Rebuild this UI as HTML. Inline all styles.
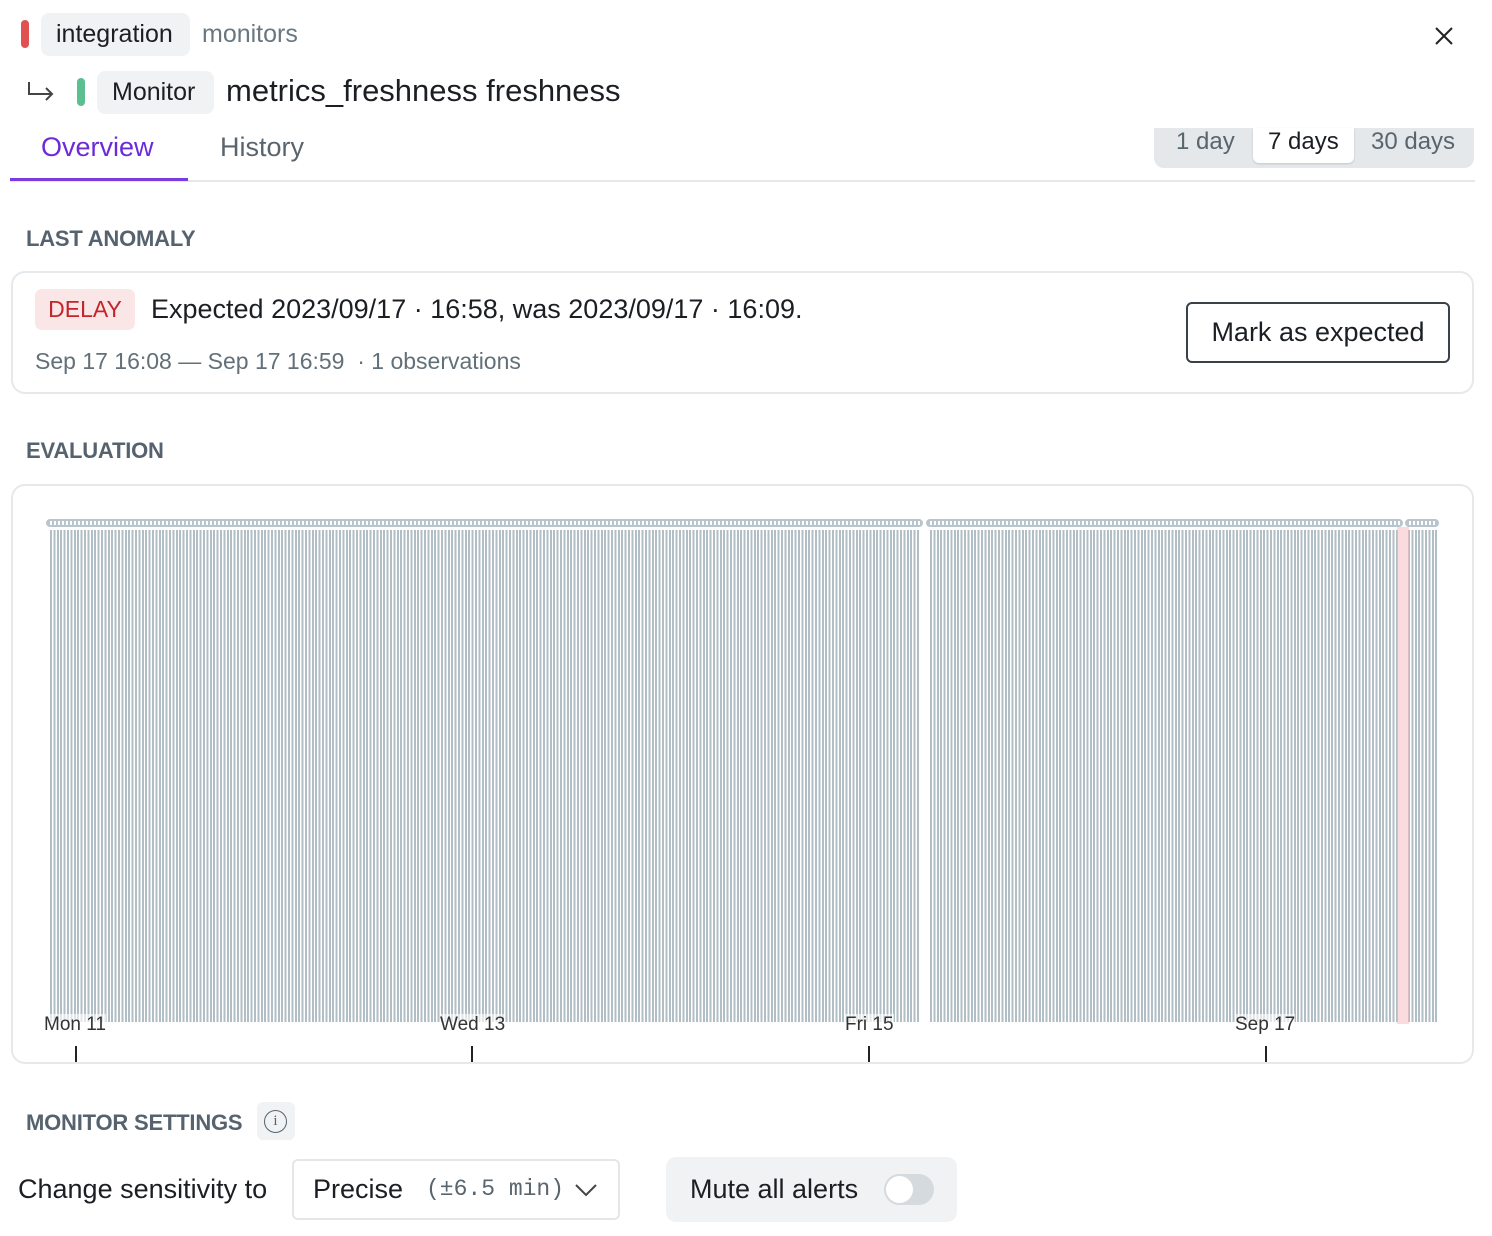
<!DOCTYPE html>
<html><head><meta charset="utf-8"><style>
*{box-sizing:border-box;margin:0;padding:0}
body{width:1492px;height:1236px;background:#fff;font-family:"Liberation Sans",sans-serif;color:#1b1f23;position:relative;overflow:hidden}
.a{position:absolute}
.chip{background:#f0f2f4;border-radius:8px}
.hdr{font-size:22px;color:#56636e;font-weight:bold;letter-spacing:-0.2px}
.bars{position:absolute;top:530px;height:492px;background:repeating-linear-gradient(90deg,#b2bec5 0 2px,#fff 2px 3.4px)}
.pill{position:absolute;top:519px;height:8px;border:2px solid #b9c5cc;border-radius:5px;background:repeating-linear-gradient(90deg,#b9c5cc 0 2px,#fff 2px 4px)}
.lbl{position:absolute;top:1014px;font-size:19px;color:#333;background:rgba(255,255,255,.6)}
.tick{position:absolute;top:1046px;width:2px;height:16px;background:#222}
</style></head><body>
<div class="a" style="left:21px;top:20px;width:8px;height:28px;background:#e05252;border-radius:4px"></div>
<div class="a chip" style="left:41px;top:13px;width:149px;height:43px;font-size:25px;line-height:43px;padding-left:15px">integration</div>
<div class="a" style="left:202px;top:20px;font-size:25px;color:#697780">monitors</div>
<svg class="a" style="left:26px;top:80px" width="30" height="24"><path d="M3 2 V14 H26 M20 8 L26 14 L20 20" stroke="#444" stroke-width="2" fill="none"/></svg>
<div class="a" style="left:77px;top:78px;width:8px;height:28px;background:#5cbf90;border-radius:4px"></div>
<div class="a chip" style="left:97px;top:71px;width:117px;height:43px;font-size:25px;line-height:43px;padding-left:15px">Monitor</div>
<div class="a" style="left:226px;top:73px;font-size:31px">metrics_freshness freshness</div>
<svg class="a" style="left:1434px;top:26px" width="20" height="20"><path d="M2 2 L18 18 M18 2 L2 18" stroke="#222" stroke-width="2"/></svg>
<div class="a" style="left:41px;top:132px;font-size:27px;color:#6c2bd9">Overview</div>
<div class="a" style="left:220px;top:132px;font-size:27px;color:#59656e">History</div>
<div class="a" style="left:10px;top:180px;width:1465px;height:2px;background:#e5e8eb"></div>
<div class="a" style="left:10px;top:178px;width:178px;height:3px;background:#7a3be0"></div>
<div class="a" style="left:1154px;top:128px;width:320px;height:40px;background:#e4e8eb;border-radius:0 0 10px 10px"></div>
<div class="a" style="left:1253px;top:128px;width:101px;height:35px;background:#fff;border-radius:0 0 6px 6px;box-shadow:0 1px 2px rgba(0,0,0,.15)"></div>
<div class="a" style="left:1176px;top:128px;font-size:24px;color:#59656e">1 day</div>
<div class="a" style="left:1268px;top:128px;font-size:24px;color:#1b1f23">7 days</div>
<div class="a" style="left:1371px;top:128px;font-size:24px;color:#59656e">30 days</div>

<div class="a hdr" style="left:26px;top:226px">LAST ANOMALY</div>
<div class="a" style="left:11px;top:271px;width:1463px;height:123px;border:2px solid #e6e9ec;border-radius:14px"></div>
<div class="a" style="left:35px;top:289px;width:100px;height:41px;background:#fbe6e7;border-radius:7px;color:#c0262c;font-size:23px;line-height:41px;text-align:center">DELAY</div>
<div class="a" style="left:151px;top:294px;font-size:27px">Expected 2023/09/17 · 16:58, was 2023/09/17 · 16:09.</div>
<div class="a" style="left:35px;top:348px;font-size:23px;color:#627079">Sep 17 16:08 — Sep 17 16:59 &nbsp;· 1 observations</div>
<div class="a" style="left:1186px;top:302px;width:264px;height:61px;border:2px solid #3b4148;border-radius:6px;font-size:27px;line-height:57px;text-align:center">Mark as expected</div>

<div class="a hdr" style="left:26px;top:438px">EVALUATION</div>
<div class="a" style="left:11px;top:484px;width:1463px;height:580px;border:2px solid #e6e9ec;border-radius:14px"></div>
<div class="pill" style="left:46px;width:877px"></div>
<div class="pill" style="left:926px;width:477px"></div>
<div class="pill" style="left:1405px;width:34px"></div>
<div class="bars" style="left:50px;width:869px"></div>
<div class="bars" style="left:930px;width:468px"></div>
<div class="bars" style="left:1408px;width:29px"></div>
<div class="a" style="left:1397px;top:527px;width:12px;height:497px;background:rgba(245,190,195,.55)"></div>
<div class="lbl" style="left:44px">Mon 11</div>
<div class="lbl" style="left:440px">Wed 13</div>
<div class="lbl" style="left:845px">Fri 15</div>
<div class="lbl" style="left:1235px">Sep 17</div>
<div class="tick" style="left:75px"></div>
<div class="tick" style="left:471px"></div>
<div class="tick" style="left:868px"></div>
<div class="tick" style="left:1265px"></div>

<div class="a hdr" style="left:26px;top:1110px">MONITOR SETTINGS</div>
<div class="a chip" style="left:257px;top:1102px;width:38px;height:38px;border-radius:6px"></div>
<div class="a" style="left:264px;top:1110px;width:23px;height:23px;border:1.5px solid #56636e;border-radius:50%;font-size:15px;line-height:20px;text-align:center;color:#56636e;font-family:'Liberation Serif',serif">i</div>
<div class="a" style="left:18px;top:1174px;font-size:27px">Change sensitivity to</div>
<div class="a" style="left:292px;top:1159px;width:328px;height:61px;border:2px solid #e3e7ea;border-radius:6px"></div>
<div class="a" style="left:313px;top:1174px;font-size:27px">Precise</div>
<div class="a" style="left:426px;top:1176px;font-size:23px;font-family:'Liberation Mono',monospace;color:#59656e">(±6.5 min)</div>
<svg class="a" style="left:574px;top:1182px" width="24" height="16"><path d="M2 3 L12 13 L22 3" stroke="#444" stroke-width="2" fill="none"/></svg>
<div class="a chip" style="left:666px;top:1157px;width:291px;height:65px;border-radius:10px"></div>
<div class="a" style="left:690px;top:1174px;font-size:27px">Mute all alerts</div>
<div class="a" style="left:884px;top:1174px;width:50px;height:31px;background:#d5dade;border-radius:16px"></div>
<div class="a" style="left:886px;top:1176px;width:27px;height:27px;background:#fff;border-radius:50%"></div>
</body></html>
